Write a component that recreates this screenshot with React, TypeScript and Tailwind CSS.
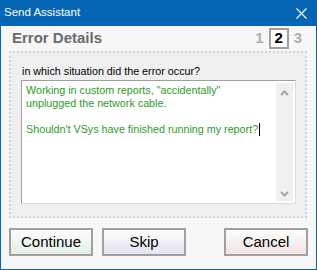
import React from 'react';

const font = { fontFamily: '"Liberation Sans", Arial, sans-serif' };

const ChevronUp: React.FC = () => (
  <svg width="9" height="6" viewBox="0 0 9 6" className="block">
    <path d="M1 5 L4.5 1.5 L8 5" fill="none" stroke="#a6a6a6" strokeWidth="2" />
  </svg>
);

const ChevronDown: React.FC = () => (
  <svg width="9" height="6" viewBox="0 0 9 6" className="block">
    <path d="M1 1 L4.5 4.5 L8 1" fill="none" stroke="#a6a6a6" strokeWidth="2" />
  </svg>
);

interface DialogButtonProps {
  label: string;
  tint: string;
}

const DialogButton: React.FC<DialogButtonProps> = ({ label, tint }) => (
  <button
    className={`w-[84px] h-[28px] border-2 border-[#a0a0a0] text-[15px] text-black flex items-center justify-center ${tint}`}
  >
    {label}
  </button>
);

export default function App() {
  return (
    <div
      className="w-[317px] h-[270px] flex flex-col border-x border-b border-[#0566b5] bg-[#f7f7f7]"
      style={font}
    >
      <div className="h-[26px] shrink-0 bg-[#0566b5] flex items-center justify-between pl-[4px] pr-[10px] -mx-px">
        <span className="text-white text-[11.5px]">Send Assistant</span>
        <svg width="11" height="11" viewBox="0 0 11 11">
          <path d="M0.5 0.5 L10.5 10.5 M10.5 0.5 L0.5 10.5" stroke="#ffffff" strokeWidth="1.1" />
        </svg>
      </div>

      <div className="h-[25px] shrink-0 flex items-center pl-[11px] pr-[14px]">
        <h2 className="text-[15px] font-bold text-[#6b6b6b]">Error Details</h2>
        <div className="ml-auto flex items-center text-[15px] font-bold">
          <span className="text-[#b0b0b0]">1</span>
          <span className="mx-[5px] w-[20px] h-[21px] border-2 border-[#a0a0a0] bg-white text-black flex items-center justify-center">
            2
          </span>
          <span className="text-[#b0b0b0]">3</span>
        </div>
      </div>

      <div className="ml-[8px] w-[298px] h-[167px] shrink-0 border-2 border-dotted border-[#d6d6d6] bg-[#f0f0f0] pt-[12px] pl-[10px]">
        <p className="pl-[1px] text-[10.75px] leading-[13px] text-black">in which situation did the error occur?</p>
        <div className="mt-[2px] w-[275px] h-[124px] border border-t-[#a0a0a0] border-l-[#a0a0a0] border-r-[#dcdcdc] border-b-[#dcdcdc] bg-white flex p-[1px]">
          <div className="flex-1 pt-[2px] pl-[3px] text-[10.75px] leading-[13px] text-[#2d9b2d]">
            <p>Working in custom reports, "accidentally"</p>
            <p>unplugged the network cable.</p>
            <p>&nbsp;</p>
            <p>
              Shouldn't VSys have finished running my report?
              <span className="inline-block w-px h-[13px] bg-black align-top ml-px" />
            </p>
          </div>
          <div className="w-[17px] mt-[1px] mb-[1px] mr-[1px] bg-[#f0f0f0] flex flex-col items-center justify-between pt-[7px] pb-[4px]">
            <ChevronUp />
            <ChevronDown />
          </div>
        </div>
      </div>

      <div className="mt-[10px] flex px-[8px]">
        <div className="flex gap-[9px]">
          <DialogButton label="Continue" tint="bg-gradient-to-b from-[#fdfdfd] to-[#e2f0e2]" />
          <DialogButton label="Skip" tint="bg-gradient-to-b from-[#fdfdfd] to-[#e4e4f4]" />
        </div>
        <div className="ml-auto">
          <DialogButton label="Cancel" tint="bg-gradient-to-b from-[#fdfdfd] to-[#f4e2e2]" />
        </div>
      </div>
    </div>
  );
}
